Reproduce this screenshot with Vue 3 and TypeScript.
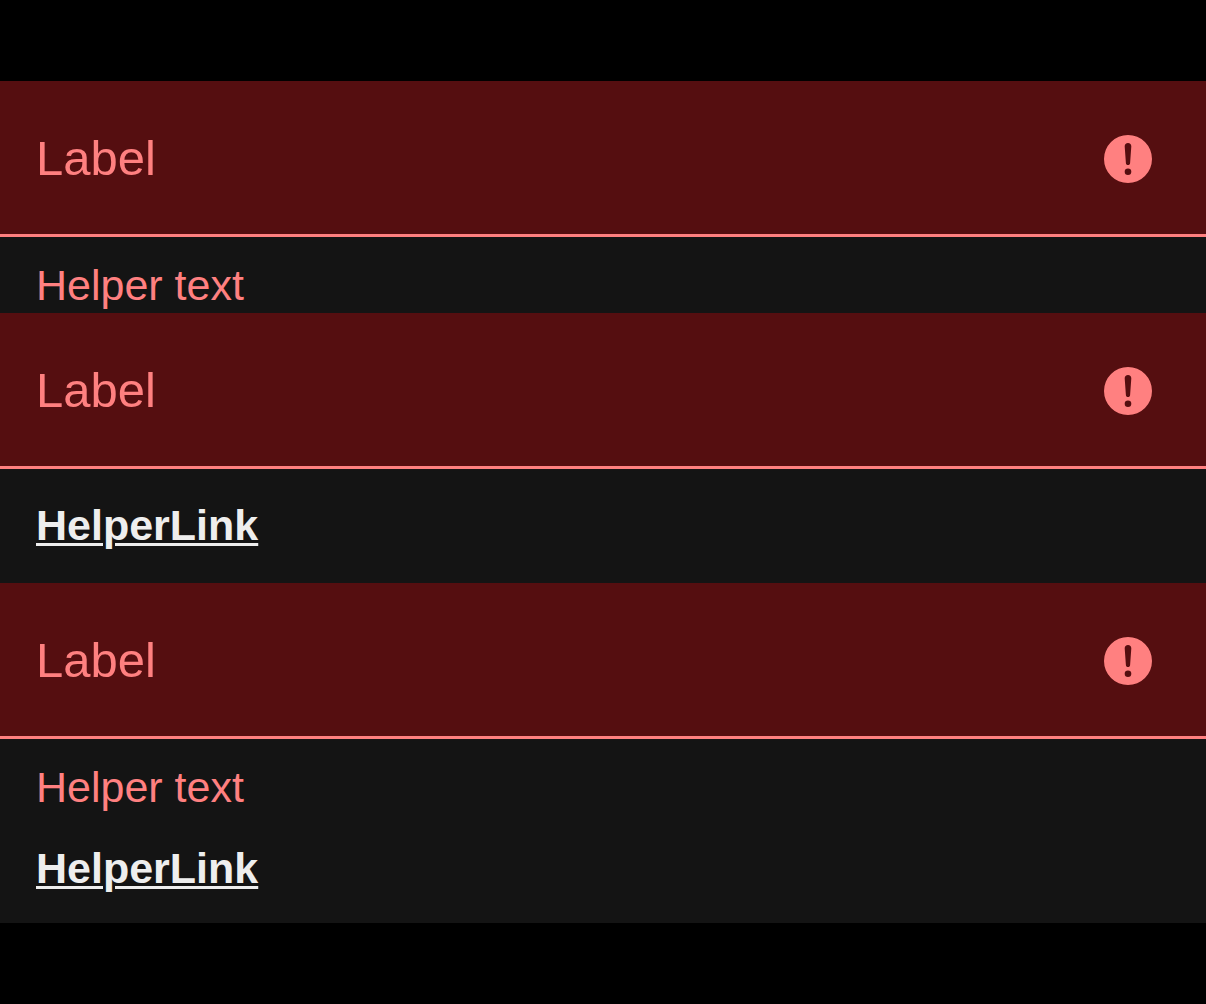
<script setup lang="ts">
interface Field {
  id: string
  helperText?: string
  helperLink?: string
}

const fields: Field[] = [
  { id: 'field-text', helperText: 'Helper text' },
  { id: 'field-link', helperLink: 'HelperLink' },
  { id: 'field-both', helperText: 'Helper text', helperLink: 'HelperLink' },
]
</script>

<template>
  <main class="form">
    <section v-for="field in fields" :key="field.id">
      <div class="field">
        <div class="control">
          <label :for="field.id">Label</label>
          <input :id="field.id" type="text" aria-invalid="true" />
        </div>
        <svg class="icon" viewBox="0 0 48 48" aria-hidden="true">
          <path
            fill-rule="evenodd"
            d="M24 0a24 24 0 1 1 0 48a24 24 0 0 1 0-48ZM24 8c-2 0-3.4 1.4-3.3 3.4l1.2 16.5c.1 1.3.9 2.1 2.1 2.1s2-.8 2.1-2.1l1.2-16.5C27.4 9.4 26 8 24 8ZM24 33.5a3.3 3.3 0 1 0 0 6.6a3.3 3.3 0 0 0 0-6.6Z"
          />
        </svg>
      </div>
      <p v-if="field.helperText" class="helper-text">{{ field.helperText }}</p>
      <div v-if="field.helperLink" class="helper-link">
        <a href="#">{{ field.helperLink }}</a>
      </div>
    </section>
  </main>
</template>

<style>
body {
  margin: 0;
  background: #000;
}
</style>

<style scoped>
.form {
  margin: 81px 0;
  background: #141414;
  color: #ff8080;
  font-family: "Liberation Sans", Arial, sans-serif;
  font-size: 43px;
  line-height: 48px;
}

.field {
  display: flex;
  align-items: center;
  padding: 0 54px 0 36px;
  background: #550e10;
  box-shadow: inset 0 -3px #ff8080;
}

.control {
  display: grid;
  flex: 1;
}

.control label,
.control input {
  grid-area: 1 / 1;
  padding: 49px 0 51px;
  font: inherit;
  font-size: 49px;
  line-height: 56px;
}

.control input {
  box-sizing: border-box;
  width: 100%;
  height: 100%;
  border: 0;
  outline: 0;
  background: transparent;
  color: inherit;
}

.icon {
  width: 48px;
  height: 48px;
  fill: #ff8080;
}

.helper-text {
  margin: 0;
  padding: 24px 36px 4px;
}

.helper-link {
  display: flex;
  padding: 32px 36px 34px;
}

.helper-text + .helper-link {
  padding-top: 29px;
  padding-bottom: 31px;
}

.helper-link a {
  color: #eee;
  font-weight: 700;
  text-decoration: underline;
  text-decoration-thickness: 3px;
  text-underline-offset: 3px;
}
</style>
